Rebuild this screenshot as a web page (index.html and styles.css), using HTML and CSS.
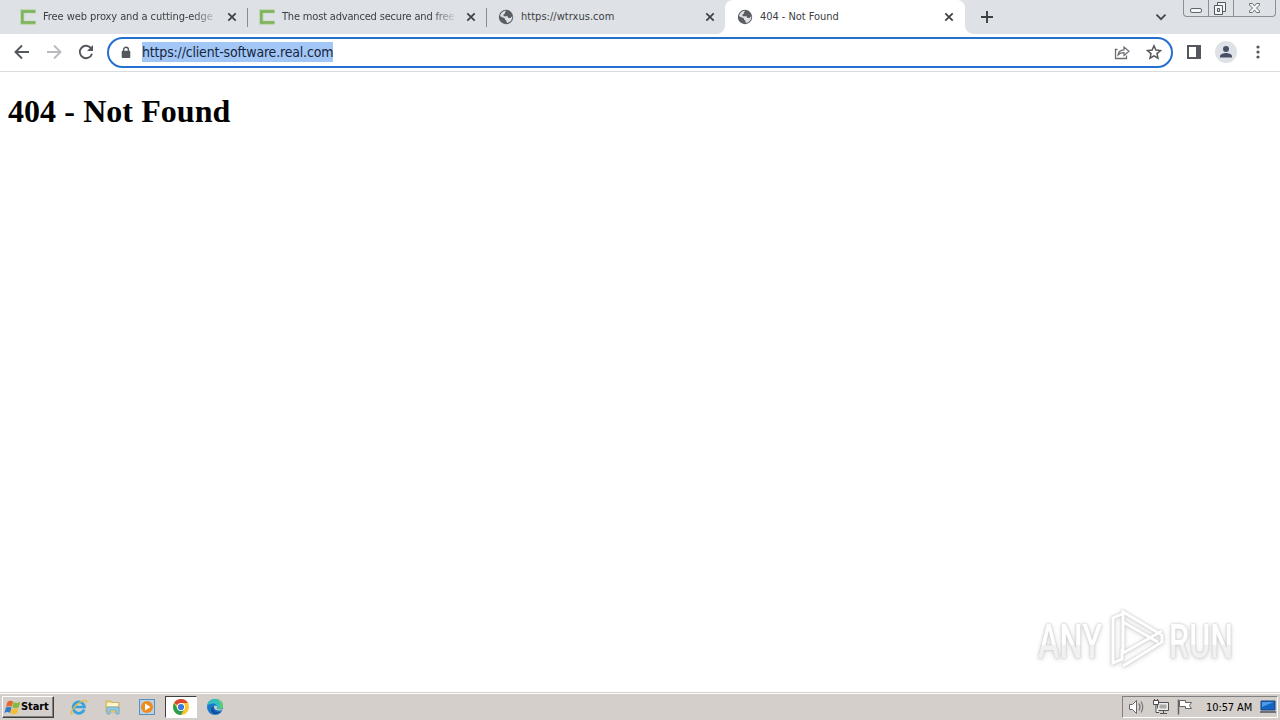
FILE: index.html
```
<!DOCTYPE html>
<html lang="en">
<head>
  <meta charset="UTF-8">
  <meta name="viewport" content="width=device-width, initial-scale=1.0">
  <title>404 - Not Found</title>
  <link rel="stylesheet" href="styles.css">
</head>

<body>
  <!-- shared icons -->
  <svg class="defs" width="0" height="0">
    <symbol id="croxy" viewBox="0 0 16 16">
      <path d="M15.500 2.300H2.300v11.400h13.200" fill="none" stroke="#b3d49d" stroke-width="4"/>
      <path d="M15.500 2.500H2.300v11h13.200" fill="none" stroke="#7db35d" stroke-width="2.400"/>
    </symbol>
    <symbol id="globe" viewBox="0 0 16 16">
      <circle cx="8" cy="8" r="7.2" fill="#5a5d61"/>
      <path d="M9 2.2c-2 .2-2.300 1-2 2.300L5.500 5.600v1.700h4.100l.8 1.700h2.100l1.800-2c.2 3.400-1.700 6-4.800 6.900l-1-.7V11.700L7 10.700V9.500L2.200 7.200c.1-2.700 2.400-5 5.100-5.500z" fill="#dee1e6"/>
      <path d="M8.500 1.500l3 1.200-.4 2-1.600 1.200H6.900V4.600z" fill="#5a5d61"/>
    </symbol>
    <symbol id="close" viewBox="0 0 10 10">
      <path d="M1.300 1.300l7.400 7.400M8.700 1.300L1.300 8.700" stroke="#3c4043" stroke-width="1.7"/>
    </symbol>
  </svg>

  <div class="tabs">
    <div class="tab">
      <svg class="favicon"><use href="#croxy"/></svg>
      <span class="title fade"><span class="t1">Free web proxy and a cutting-edge</span></span>
      <svg class="close"><use href="#close"/></svg>
    </div>
    <div class="tab">
      <svg class="favicon"><use href="#croxy"/></svg>
      <span class="title fade"><span class="t2">The most advanced secure and free</span></span>
      <svg class="close"><use href="#close"/></svg>
    </div>
    <div class="tab last">
      <svg class="favicon"><use href="#globe"/></svg>
      <span class="title"><span class="t3">https://wtrxus.com</span></span>
      <svg class="close"><use href="#close"/></svg>
    </div>
    <div class="tab active">
      <svg class="favicon"><use href="#globe"/></svg>
      <span class="title"><span class="t4">404 - Not Found</span></span>
      <svg class="close"><use href="#close"/></svg>
    </div>
    <svg class="plus" viewBox="0 0 14 14"><path d="M7 1v12M1 7h12" stroke="#3c4043" stroke-width="1.9"/></svg>
    <svg class="chevron" viewBox="0 0 12 8"><path d="M1.500 1.700L6 6.200l4.500-4.500" fill="none" stroke="#45484d" stroke-width="1.900"/></svg>
    <div class="window-buttons">
      <svg class="minimize" viewBox="0 0 24 16"><rect x="6.500" y="8.500" width="11" height="4" rx="1.500" fill="#f4f5f6" stroke="#62656b"/></svg>
      <svg class="restore" viewBox="0 0 24 16">
        <path d="M8.500 2.500h8v9h-8z" fill="#f4f5f6" stroke="#55585d"/>
        <path d="M5.500 5.500h8v9h-8z" fill="#f4f5f6" stroke="#55585d"/>
        <path d="M8.500 8.500h2v3h-2z" fill="#dee1e6" stroke="#55585d"/>
      </svg>
      <svg class="exit" viewBox="0 0 41 16"><path d="M15.500 3.500h3l2 2.500 2-2.500h3v1.500l-3 3 3 3v1.500h-3l-2-2.500-2 2.500h-3V11l3-3-3-3z" fill="#f4f5f6" stroke="#6e7176"/></svg>
    </div>
  </div>

  <div class="toolbar">
    <svg class="nav" viewBox="0 0 16 16"><path d="M15 8H2M8 1.500L1.500 8 8 14.500" fill="none" stroke="#54575b" stroke-width="1.900"/></svg>
    <svg class="nav" viewBox="0 0 16 16"><path d="M1 8h13M8 1.500L14.500 8 8 14.500" fill="none" stroke="#b8babd" stroke-width="1.900"/></svg>
    <svg class="nav" viewBox="0 0 16 16">
      <path d="M13.200 4.500A6.200 6.200 0 1 0 14 9.700" fill="none" stroke="#54575b" stroke-width="1.900"/>
      <path d="M15 1v6H9z" fill="#54575b"/>
    </svg>
    <div class="omnibox">
      <svg class="lock" viewBox="0 0 10 13">
        <path d="M2.600 6V3.600a2.400 2.400 0 0 1 4.800 0V6" fill="none" stroke="#54575b" stroke-width="1.400"/>
        <rect x=".7" y="4.700" width="8.600" height="7.300" rx="1" fill="#54575b"/>
      </svg>
      <span class="url">https://client-software.real.com</span>
      <svg class="share" viewBox="0 0 16 16">
        <path d="M3.500 5.500h-2v9h11v-3" fill="none" stroke="#6a6d71" stroke-width="1.300"/>
        <path d="M4 11c.4-3.500 2.200-5 6-5.200V3l5 4.300-5 4.200V8.700C7.500 8.700 5.600 9.300 4 11z" fill="none" stroke="#6a6d71" stroke-width="1.200"/>
      </svg>
      <svg class="star" viewBox="0 0 16 16"><path d="M8 1.800l1.900 4.300 4.600.4-3.500 3.100 1 4.600L8 11.800l-4 2.400 1-4.600-3.500-3.100 4.600-.4z" fill="none" stroke="#54575b" stroke-width="1.500"/></svg>
    </div>
    <svg class="panel" viewBox="0 0 14 14"><path d="M1 1h12v12H1z" fill="none" stroke="#54575b" stroke-width="2"/><path d="M9 1h4v12H9z" fill="#54575b"/></svg>
    <svg class="profile" viewBox="0 0 22 22">
      <circle cx="11" cy="11" r="11" fill="#dee1e6"/>
      <circle cx="11" cy="8" r="3" fill="#475066"/>
      <path d="M5 16.500v-1.300c0-2.200 4-3.200 6-3.200s6 1 6 3.200v1.300z" fill="#475066"/>
    </svg>
    <svg class="menu" viewBox="0 0 4 14"><g fill="#54575b"><circle cx="2" cy="2" r="1.600"/><circle cx="2" cy="7" r="1.600"/><circle cx="2" cy="12" r="1.600"/></g></svg>
  </div>

  <main class="page">
    <h1>404 - Not Found</h1>
    <svg class="watermark" viewBox="0 0 210 70">
      <defs>
        <linearGradient id="shade" x1="0" y1="0" x2="0" y2="1">
          <stop offset=".55" stop-color="#fff"/>
          <stop offset=".56" stop-color="#f1f1f1"/>
        </linearGradient>
      </defs>
      <g class="mark">
        <text x="8" y="54" textLength="64" lengthAdjust="spacingAndGlyphs">ANY</text>
        <text x="139" y="54" textLength="64" lengthAdjust="spacingAndGlyphs">RUN</text>
        <path d="M93 47V8l38 22.500M93 18l35 20M92 10l-9 4V59l9-4V45M93 49l39-22M93 62l39-24v-8" fill="none"/>
      </g>
    </svg>
  </main>

  <div class="taskbar">
    <div class="start">
      <svg viewBox="0 0 18 18">
        <path d="M3.500 3.500c2-2 4-2 6.200-.6L8.200 8.300c-2-1.400-4.100-1.200-6.100.1z" fill="#e8672b"/>
        <path d="M10.300 3.300c2.300 1.300 4.500 1.200 7-.3L15.700 8.700c-2.400 1.400-4.700 1.400-6.900.1z" fill="#86b940"/>
        <path d="M1.900 9.300c2.100-1.500 4-1.500 6.100-.1l-1.600 5.600C4.400 13.400 2.400 13.600.4 15z" fill="#3979c3"/>
        <path d="M8.600 9.700c2.300 1.300 4.500 1.200 6.900 0l-1.600 5.500c-2.200 1.300-4.700 1.300-6.900 0z" fill="#f4bf2d"/>
      </svg>
      <span>Start</span>
    </div>
    <div class="launch">
      <svg viewBox="0 0 18 18">
        <path d="M14.200 11.500A5.700 5.700 0 1 1 14.500 9H5" fill="none" stroke="#37a2df" stroke-width="2.700"/>
        <path d="M3 15c-4 3-1.500-4 4-8.500 5-4.200 11-6 9.500-1.700" fill="none" stroke="#e9b93c" stroke-width="1.300"/>
      </svg>
    </div>
    <div class="launch">
      <svg viewBox="0 0 18 18">
        <path d="M2 3h5l1 1.500h7V14H2z" fill="#eed57b" stroke="#c9a749" stroke-width=".7"/>
        <path d="M3 5h11v3H3z" fill="#fff6cf"/>
        <path d="M3 9h12v7h-3v-4H6v4H3z" fill="#8fcbe8" stroke="#569fbf" stroke-width=".6"/>
      </svg>
    </div>
    <div class="launch">
      <svg viewBox="0 0 18 18">
        <rect x="1.500" y="1.500" width="15" height="15" fill="#b5d4ec" stroke="#5790bd"/>
        <circle cx="9" cy="9" r="6" fill="#f08a1c"/>
        <path d="M7 5.500l5.500 3.500L7 12.500z" fill="#fff"/>
      </svg>
    </div>
    <div class="launch running">
      <svg viewBox="0 0 18 18">
        <circle cx="9" cy="9" r="8" fill="#fbc52d"/>
        <path d="M9 9L2.100 5A8 8 0 0 1 15.900 5H9z" fill="#dc4435"/>
        <path d="M9 17A8 8 0 0 1 2.100 5l3.500 6L9 13l3.300-2z" fill="#2c9e50"/>
        <circle cx="9" cy="9" r="4" fill="#fff"/>
        <circle cx="9" cy="9" r="3.100" fill="#3b78e0"/>
      </svg>
    </div>
    <div class="launch">
      <svg viewBox="0 0 18 18">
        <circle cx="9" cy="9" r="8" fill="#1878c9"/>
        <path d="M1.200 7.500C2.300 3 5.300 1 9 1c5 0 8 3.300 8 6.500 0 3-2.500 4.200-5 4-1.500-.1-2.300-.7-1.500-1.700 1-2.200-.5-4.300-3.500-4.300-2.500 0-4.500 1-5.800 2z" fill="#35bfc0"/>
        <path d="M10.500 1.200c4.300.6 6.500 3.500 6.500 6.300 0 2.500-2 4-4.500 4 3-3 2.200-8-2-10.300z" fill="#62cd71"/>
        <path d="M7.500 8.500c-1 4 2.500 6.500 7.500 5-3 4-10 3-10-2 0-1.500 1-2.500 2.500-3z" fill="#124f9b"/>
        <path d="M8.200 7.800c-1 3.700 3.300 5.700 7.900 4.200l1.200-1.500c-2 1.300-6.500 1.300-6.800-.2.800-1 .7-2-.2-2.500z" fill="#d4cfca"/>
      </svg>
    </div>
    <div class="tray">
      <svg viewBox="0 0 18 18">
        <path d="M1.500 6.500h3l4-4v13l-4-4h-3z" fill="#fff" stroke="#69676a"/>
        <path d="M11 5.500q2 3.500 0 7M13 3.500q3.500 5.500 0 11" fill="none" stroke="#777579" stroke-width="1.200"/>
      </svg>
      <svg viewBox="0 0 18 18">
        <path d="M5.500 4.500h11v8h-11zM8 15.500h7M11.500 13v2" fill="#eeeded" stroke="#535155"/>
        <path d="M7.500 6.500h7v4h-7z" fill="#aaa7a5"/>
        <path d="M1.500 2.500h5v4h-5zM4 6.500v8h3M2.500 1v2M5.500 1v2" fill="#fff" stroke="#4d4b4f"/>
      </svg>
      <svg viewBox="0 0 18 18">
        <path d="M2.500 1.500v15" stroke="#666367" stroke-width="1.500"/>
        <path d="M3.500 2.500h6v2h6l-2 3 2 3h-6v-2h-6z" fill="#fff" stroke="#666367"/>
      </svg>
      <span class="clock">10:57 AM</span>
      <svg class="desktop" viewBox="0 0 18 18"><path d="M2 3h14v9H2z" fill="#1464c4" stroke="#18447f"/><path d="M3 4h12L3 9z" fill="#4d9ce7"/><path d="M1 14h16" stroke="#4b5360" stroke-width="1.500"/></svg>
    </div>
  </div>
</body>
</html>
```
FILE: styles.css
```
* {
  box-sizing: border-box;
}

body {
  display: flex;
  flex-direction: column;
  height: 100vh;
  margin: 0;
  overflow: hidden;
  background: #fff;
  color: #000;
  font-family: "DejaVu Sans Condensed", "DejaVu Sans", sans-serif;
}

svg {
  display: block;
  flex: none;
}

.defs {
  position: absolute;
}

/* tab strip */
.tabs {
  display: flex;
  align-items: center;
  height: 34px;
  flex: none;
  padding-left: 9px;
  background: #dee1e6;
}

.tab {
  display: flex;
  align-items: center;
  position: relative;
  width: 239px;
  height: 34px;
  padding: 0 11px;
  flex: none;
}

.tab::after {
  content: "";
  position: absolute;
  right: 0;
  top: 8px;
  width: 1px;
  height: 19px;
  background: #888b91;
}

.tab.last {
  width: 238px;
}

.tab.last::after {
  display: none;
}

.tab.active {
  width: 240px;
  padding-left: 12px;
  background: #fff;
  border-radius: 8px 8px 0 0;
}

.tab.active::before,
.tab.active::after {
  content: "";
  position: absolute;
  top: auto;
  bottom: 0;
  width: 8px;
  height: 8px;
}

.tab.active::before {
  left: -8px;
  background: radial-gradient(circle at 0 0, #dee1e6 7.5px, #fff 8px);
}

.tab.active::after {
  right: -8px;
  background: radial-gradient(circle at 100% 0, #dee1e6 7.5px, #fff 8px);
}

.favicon {
  width: 16px;
  height: 16px;
  margin-right: 7px;
}

.title {
  width: 174px;
  flex: none;
  overflow: hidden;
  white-space: nowrap;
  font-size: 11px;
  line-height: 16px;
  color: #3c4043;
}

.title.fade {
  -webkit-mask-image: linear-gradient(to right, #000 150px, transparent 176px);
  mask-image: linear-gradient(to right, #000 150px, transparent 176px);
}

.t1 { letter-spacing: -0.08px; }
.t2 { letter-spacing: -0.18px; }
.t3 { letter-spacing: 0.03px; }
.t4 { letter-spacing: -0.05px; }

.close {
  width: 10px;
  height: 10px;
  margin-left: 10px;
}

.plus {
  width: 14px;
  height: 14px;
  margin-left: 15px;
}

.chevron {
  width: 12px;
  height: 8px;
  margin-left: auto;
}

.window-buttons {
  display: flex;
  align-self: flex-start;
  width: 93px;
  height: 17px;
  margin: 0 4px 0 16px;
  border: 1px solid #8c8f95;
  border-top: 0;
  border-radius: 0 0 4px 4px;
}

.minimize,
.restore {
  width: 25px;
  height: 16px;
  border-right: 1px solid #8c8f95;
}

.exit {
  width: 41px;
  height: 16px;
}

/* toolbar */
.toolbar {
  display: flex;
  align-items: center;
  height: 38px;
  flex: none;
  padding: 0 20px 1px 14px;
  border-bottom: 1px solid #dadce0;
}

.nav {
  width: 16px;
  height: 16px;
  margin-right: 16px;
}

.omnibox {
  display: flex;
  align-items: center;
  width: 1066px;
  height: 31px;
  margin: 1px 0 0 -3px;
  padding: 0 9px 1px 12px;
  border: 2px solid #2470cf;
  border-radius: 16px;
  flex: none;
}

.lock {
  width: 10px;
  height: 13px;
}

.url {
  margin: 0 auto 0 11px;
  height: 20px;
  background: #a2c7f7;
  color: #17263a;
  font-size: 14px;
  line-height: 21px;
  letter-spacing: -0.18px;
  white-space: nowrap;
}

.share,
.star {
  width: 16px;
  height: 16px;
}

.star {
  margin-left: 16px;
}

.panel {
  width: 14px;
  height: 14px;
  margin-left: 14px;
}

.profile {
  width: 22px;
  height: 22px;
  margin-left: 14px;
}

.menu {
  width: 4px;
  height: 14px;
  margin-left: auto;
}

/* page */
.page {
  display: flex;
  flex-direction: column;
  justify-content: space-between;
  flex: 1;
  padding: 21px 40px 18px 8px;
}

h1 {
  margin: 0;
  font: bold 32px/37px "Liberation Serif", serif;
  word-spacing: 0.3px;
}

.watermark {
  width: 210px;
  height: 70px;
  align-self: flex-end;
  overflow: visible;
}

.mark {
  fill: url(#shade);
  stroke: #fff;
  stroke-width: 3;
  filter: drop-shadow(0 0 1px #c2c2c2) drop-shadow(0 1px 2px #ddd);
}

.mark text {
  font: 500 49px Roboto, sans-serif;
  stroke-width: 0;
}

/* taskbar */
.taskbar {
  display: flex;
  align-items: center;
  height: 28px;
  flex: none;
  padding: 1px 2px 0;
  border-top: 1px solid #d4cfca;
  background: #d4cfca;
  box-shadow: inset 0 1px #fff;
}

.start {
  display: flex;
  align-items: center;
  width: 52px;
  height: 22px;
  margin-right: 10px;
  padding-left: 1px;
  border: 1px solid;
  border-color: #fff #404040 #404040 #fff;
  box-shadow: inset -1px -1px #808080;
  font: bold 11px/18px "DejaVu Sans Condensed", sans-serif;
  letter-spacing: -0.1px;
}

.start svg {
  width: 17px;
  height: 17px;
}

.launch {
  display: grid;
  place-items: center;
  width: 30px;
  height: 22px;
  margin-right: 4px;
}

.launch svg {
  width: 18px;
  height: 18px;
}

.launch.running {
  width: 32px;
  margin-left: -1px;
  margin-right: 3px;
  background: #fff;
  border: 1px solid;
  border-color: #404040 #fff #fff #404040;
}

.tray {
  display: flex;
  align-items: center;
  width: 156px;
  height: 22px;
  margin-left: auto;
  padding-left: 5px;
  border: 1px solid;
  border-color: #808080 #fff #fff #808080;
}

.tray svg {
  width: 18px;
  height: 18px;
  margin-right: 6px;
}

.clock {
  width: 54px;
  margin-left: 6px;
  font-size: 11px;
  letter-spacing: -0.1px;
  white-space: nowrap;
}

.tray .desktop {
  margin: 0;
}
```
